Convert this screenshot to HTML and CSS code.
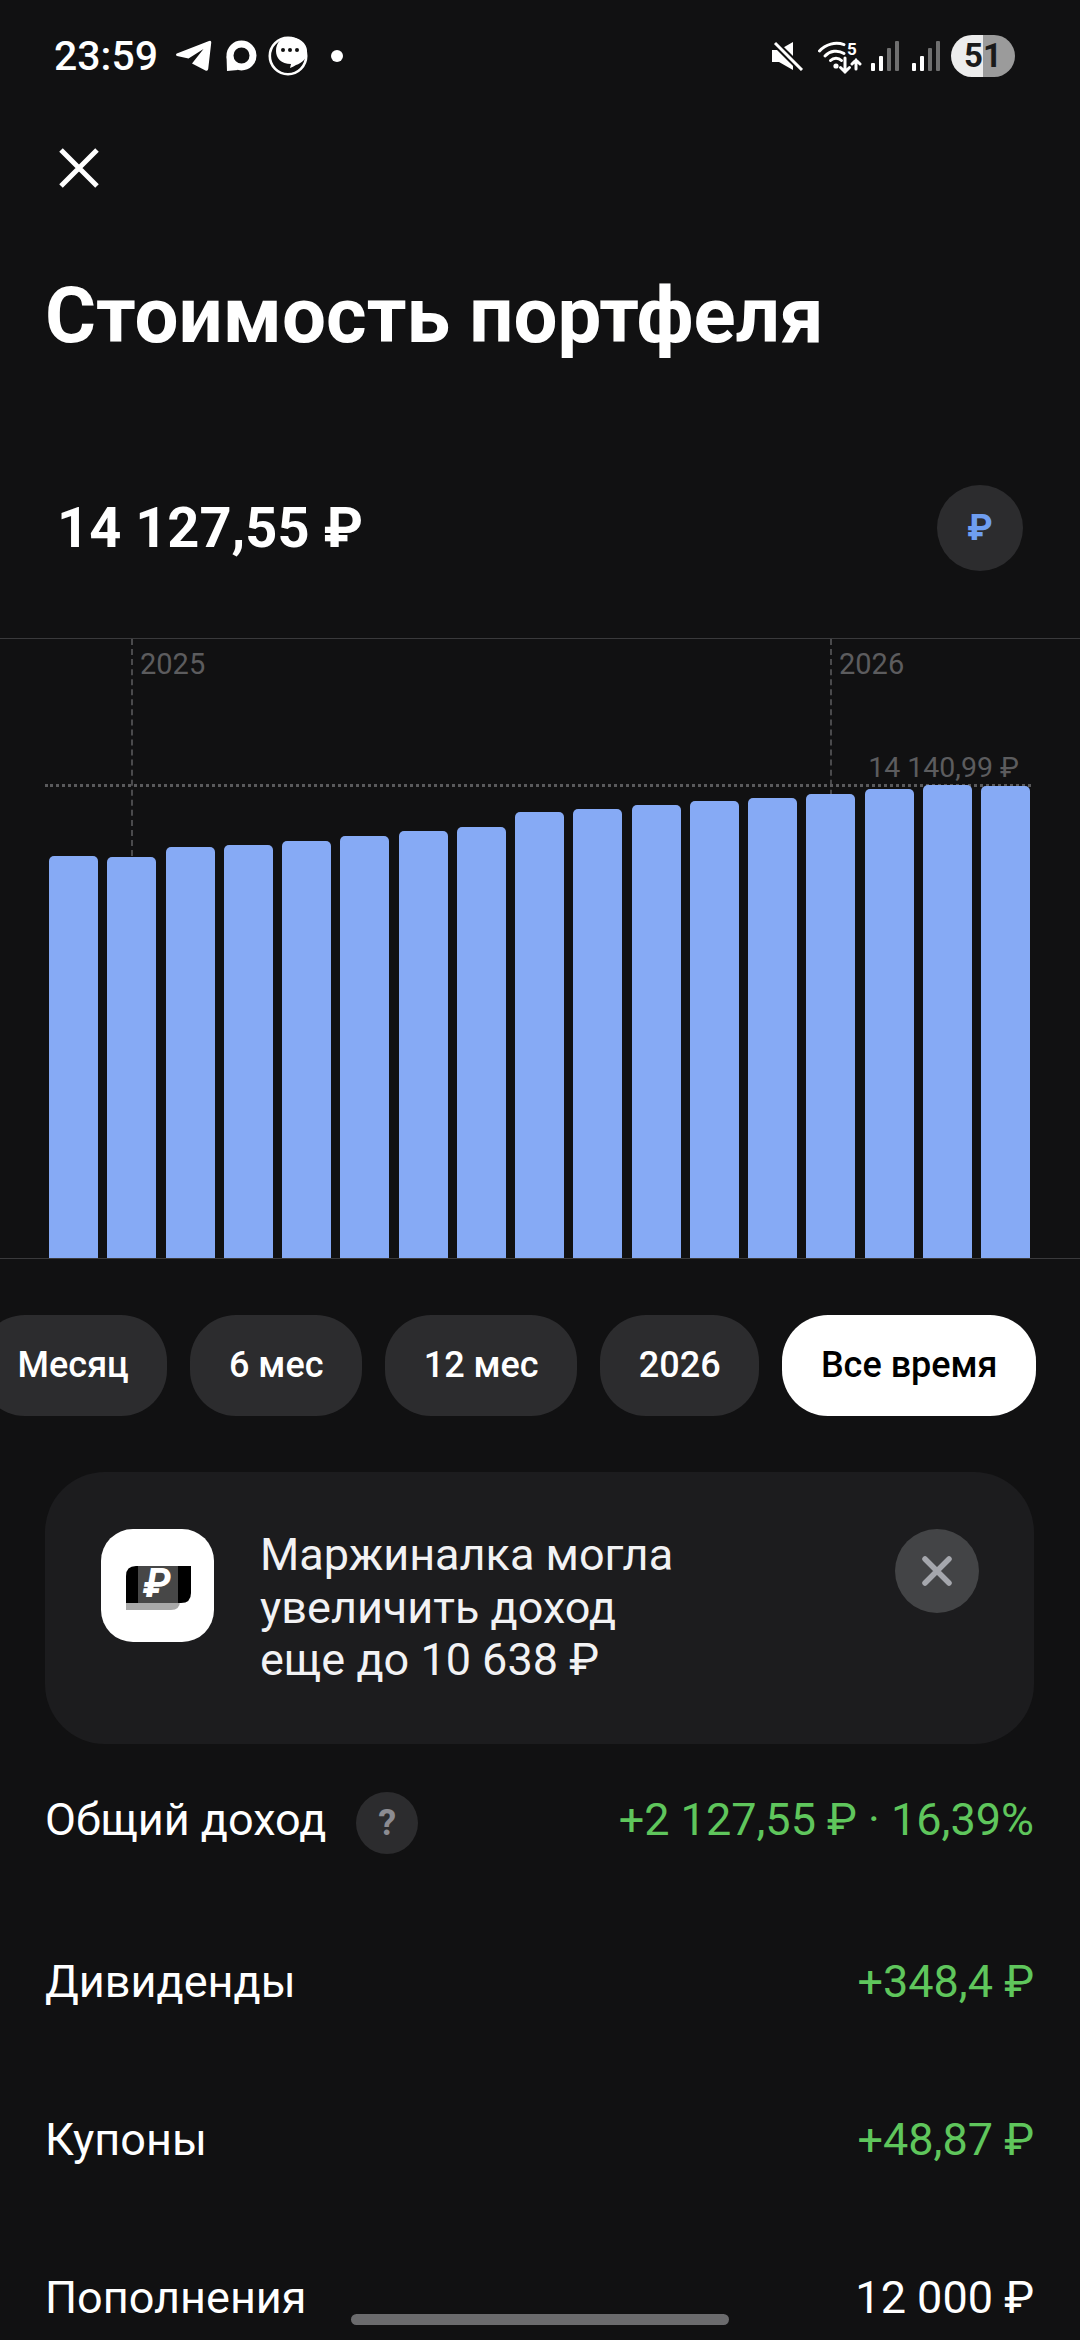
FILE: index.html
```html
<!DOCTYPE html>
<html lang="ru">
<head>
    <meta charset="UTF-8">
    <meta name="viewport" content="width=device-width, initial-scale=1.0">
    <title>Стоимость портфеля</title>
    <link rel="stylesheet" href="styles.css">
</head>
<body>
    <div class="statusbar">
        <div class="status-left">
            <span class="time">23:59</span>
            <svg class="ic-telegram" width="36" height="32" viewBox="0 0 36 32"><path fill="#fff" d="M0.8 13.6 L33 1 Q35.6 0 35.2 3 L32.2 29 Q31.8 31.8 29 30.3 L16 23.6 L27.5 9 L12.5 18.6 L1 16 Q-0.8 14.6 0.8 13.6 Z"/></svg>
            <svg class="ic-chat" width="32" height="32" viewBox="0 0 32 32"><circle cx="16.5" cy="15.5" r="11.5" fill="none" stroke="#fff" stroke-width="7"/><path fill="#fff" d="M1.5 16 L2 31 L13 30 Z"/></svg>
            <svg class="ic-smile" width="40" height="40" viewBox="0 0 40 40">
                <circle cx="20" cy="20" r="18.2" fill="none" stroke="#fff" stroke-width="2.6"/>
                <path fill="#fff" d="M21 1 C31 1 39 7 39 15 C39 23 34 27 28 29 Q25 31 22 32 L23 28 C13 28 8 22 8 15 C8 7 13 1 21 1 Z"/>
                <circle cx="15" cy="14" r="2" fill="#111"/><circle cx="22" cy="14" r="2" fill="#111"/><circle cx="29" cy="14" r="2" fill="#111"/>
            </svg>
            <span class="status-dot"></span>
        </div>
        <div class="status-right">
            <svg class="ic-mute" width="32" height="30" viewBox="0 0 32 30">
                <path fill="#fff" d="M0 9 H7 L21 1 V29 L7 21 H0 Z"/>
                <path d="M1 0 L30 29" stroke="#111" stroke-width="7"/>
                <path d="M3 2 L30 29" stroke="#fff" stroke-width="3"/>
            </svg>
            <svg class="ic-wifi" width="44" height="38" viewBox="0 -6 44 38">
                <g fill="none" stroke="#fff" stroke-width="3" stroke-linecap="round">
                    <path d="M1.5 8 A23 23 0 0 1 26 1.6"/>
                    <path d="M7 13 A15 15 0 0 1 26 10.5"/>
                    <path d="M12.5 17.5 A8 8 0 0 1 23.5 17.5"/>
                    <path d="M27 15 V29 M22.5 24.5 L27 29 L31.5 24.5"/>
                    <path d="M38 26 V17 M34 21 L38 17 L42 21"/>
                </g>
                <circle cx="18" cy="23" r="2.6" fill="#fff"/>
                <text class="wifi-num" x="29" y="12">5</text>
            </svg>
            <svg class="ic-signal" width="28" height="30" viewBox="0 0 28 30">
                <rect x="0" y="22" width="4" height="8" rx="1" fill="#fff"/><rect x="8" y="15" width="4" height="15" rx="1" fill="#fff"/>
                <rect x="16" y="7" width="4" height="23" rx="1" fill="#6f6f6f"/><rect x="24" y="0" width="4" height="30" rx="1" fill="#6f6f6f"/>
            </svg>
            <svg class="ic-signal2" width="28" height="30" viewBox="0 0 28 30">
                <rect x="0" y="22" width="4" height="8" rx="1" fill="#fff"/><rect x="8" y="15" width="4" height="15" rx="1" fill="#fff"/>
                <rect x="16" y="7" width="4" height="23" rx="1" fill="#6f6f6f"/><rect x="24" y="0" width="4" height="30" rx="1" fill="#6f6f6f"/>
            </svg>
            <div class="battery">51</div>
        </div>
    </div>

    <div class="nav">
        <svg width="40" height="40" viewBox="0 0 40 40"><path d="M2 2 L38 38 M38 2 L2 38" stroke="#fff" stroke-width="5"/></svg>
    </div>

    <h1 class="title">Стоимость портфеля</h1>

    <div class="value-row">
        <div class="value">14 127,55 ₽</div>
        <div class="currency">₽</div>
    </div>

    <div class="chart">
        <div class="year-line year-2025"><span>2025</span></div>
        <div class="year-line year-2026"><span>2026</span></div>
        <div class="max-line"><span>14 140,99 ₽</span></div>
        <div class="bars">
            <div class="bar" style="height:402px"></div>
            <div class="bar" style="height:401px"></div>
            <div class="bar" style="height:411px"></div>
            <div class="bar" style="height:413px"></div>
            <div class="bar" style="height:417px"></div>
            <div class="bar" style="height:422px"></div>
            <div class="bar" style="height:427px"></div>
            <div class="bar" style="height:431px"></div>
            <div class="bar" style="height:446px"></div>
            <div class="bar" style="height:449px"></div>
            <div class="bar" style="height:453px"></div>
            <div class="bar" style="height:457px"></div>
            <div class="bar" style="height:460px"></div>
            <div class="bar" style="height:464px"></div>
            <div class="bar" style="height:469px"></div>
            <div class="bar" style="height:473px"></div>
            <div class="bar" style="height:472px"></div>
        </div>
    </div>

    <div class="pills">
        <div class="pill">Месяц</div>
        <div class="pill">6 мес</div>
        <div class="pill">12 мес</div>
        <div class="pill">2026</div>
        <div class="pill active">Все время</div>
    </div>

    <div class="promo">
        <div class="promo-icon">
            <svg width="113" height="113" viewBox="0 0 113 113">
                <path fill="#a9a9a9" d="M25 60 H79 V72 Q79 81 70 81 H25 Z"/>
                <path fill="#000" d="M25 47 Q25 37 35 37 H90 V64 Q90 74 80 74 H25 Z"/>
                <rect x="37" y="37" width="40" height="37" fill="#474747"/>
                <text class="promo-rub" x="56" y="68" text-anchor="middle">₽</text>
            </svg>
        </div>
        <div class="promo-text">Маржиналка могла<br>увеличить доход<br>еще до 10 638 ₽</div>
        <div class="promo-close">
            <svg width="30" height="30" viewBox="0 0 30 30"><path d="M3 3 L27 27 M27 3 L3 27" stroke="#a5a7ad" stroke-width="5.5" stroke-linecap="round"/></svg>
        </div>
    </div>

    <div class="rows">
        <div class="row row-first">
            <div class="row-label">
                <span>Общий доход</span>
                <span class="help">?</span>
            </div>
            <span class="plus">+2 127,55 ₽ · 16,39%</span>
        </div>
        <div class="row">
            <span>Дивиденды</span>
            <span class="plus">+348,4 ₽</span>
        </div>
        <div class="row">
            <span>Купоны</span>
            <span class="plus">+48,87 ₽</span>
        </div>
        <div class="row">
            <span>Пополнения</span>
            <span>12 000 ₽</span>
        </div>
    </div>

    <div class="home-bar"></div>
</body>
</html>
```

FILE: styles.css
```css
html, body {
    margin: 0;
    padding: 0;
}
body {
    position: relative;
    width: 1080px;
    height: 2340px;
    overflow: hidden;
    background-color: #111112;
    color: #fff;
    font-family: Roboto, "Noto Sans", sans-serif;
}

/* status bar */
.statusbar {
    height: 112px;
    padding: 0 65px 0 54px;
    display: flex;
    justify-content: space-between;
    align-items: center;
}
.status-left, .status-right {
    display: flex;
    align-items: center;
}
.time {
    font-size: 41px;
    font-weight: 500;
    width: 122px;
}
.ic-chat {
    margin-left: 13px;
}
.ic-smile {
    margin-left: 11px;
}
.status-dot {
    width: 12px;
    height: 12px;
    margin-left: 23px;
    border-radius: 50%;
    background-color: #fff;
}
.ic-wifi {
    margin-left: 14px;
}
.wifi-num {
    font-size: 17px;
    font-weight: 700;
    fill: #fff;
}
.ic-signal {
    margin-left: 9px;
}
.ic-signal2 {
    margin-left: 13px;
}
.battery {
    width: 64px;
    height: 42px;
    margin-left: 11px;
    border-radius: 21px;
    background: linear-gradient(90deg, #ececec 50%, #9b9b9b 50%);
    color: #1a1a1a;
    font-size: 33px;
    font-weight: 700;
    line-height: 42px;
    text-align: center;
}

/* header */
.nav {
    height: 112px;
    padding-left: 59px;
    display: flex;
    align-items: center;
}
.title {
    margin: 50px 0 0 45px;
    font-size: 78px;
    font-weight: 700;
    line-height: 84px;
}
.value-row {
    height: 86px;
    margin-top: 127px;
    padding: 0 57px 0 57px;
    display: flex;
    justify-content: space-between;
    align-items: center;
}
.value {
    font-size: 56px;
    font-weight: 700;
}
.currency {
    width: 86px;
    height: 86px;
    border-radius: 50%;
    background-color: #2c2c2e;
    color: #6f9ef0;
    font-size: 36px;
    font-weight: 700;
    line-height: 86px;
    text-align: center;
}

/* chart */
.chart {
    position: relative;
    height: 619px;
    margin-top: 67px;
    border-top: 1px solid #3a3a3c;
    border-bottom: 1px solid #3a3a3c;
    display: flex;
    align-items: flex-end;
}
.year-line {
    position: absolute;
    top: 0;
    bottom: 0;
    border-left: 2px dashed #4a4a4c;
    color: #5c5c5e;
    font-size: 29px;
}
.year-line span {
    display: block;
    margin: 8px 0 0 7px;
}
.year-2025 {
    left: 131px;
}
.year-2026 {
    left: 830px;
}
.max-line {
    position: absolute;
    left: 45px;
    width: 986px;
    top: 145px;
    border-top: 3px dotted #5a5a5c;
    color: #5c5c5e;
    font-size: 28.5px;
}
.max-line span {
    position: absolute;
    right: 12px;
    bottom: 3px;
}
.bars {
    position: relative;
    margin-left: 49px;
    display: flex;
    align-items: flex-end;
    gap: 9.25px;
}
.bar {
    width: 49px;
    border-radius: 5px 5px 0 0;
    background-color: #86aaf5;
}

/* period pills */
.pills {
    margin: 56px 0 0 -21px;
    display: flex;
    gap: 23px;
}
.pill {
    height: 101px;
    padding: 0 38.6px;
    border-radius: 46px;
    background-color: #2c2c2e;
    font-size: 36px;
    font-weight: 500;
    line-height: 101px;
}
.pill.active {
    background-color: #fff;
    color: #000;
}

/* promo card */
.promo {
    width: 989px;
    height: 272px;
    margin: 56px 0 0 45px;
    padding: 57px 55px 0 56px;
    box-sizing: border-box;
    border-radius: 60px;
    background-color: #1c1c1e;
    display: flex;
    align-items: flex-start;
}
.promo-icon {
    width: 113px;
    height: 113px;
    border-radius: 32px;
    background-color: #fff;
    flex: none;
}
.promo-rub {
    font-size: 40px;
    font-weight: 700;
    font-style: italic;
    fill: #fff;
}
.promo-text {
    flex: 1;
    margin: 0 0 0 46px;
    color: #f2f2f4;
    font-size: 45px;
    line-height: 52.5px;
}
.promo-close {
    width: 84px;
    height: 84px;
    border-radius: 50%;
    background-color: #434446;
    display: flex;
    justify-content: center;
    align-items: center;
}

/* totals */
.rows {
    margin: 0 46px 0 45px;
}
.row {
    height: 158px;
    display: flex;
    justify-content: space-between;
    align-items: center;
    font-size: 45px;
}
.row-first > span, .row-label > span:first-child {
    position: relative;
    top: -4px;
}
.row-label {
    display: flex;
    align-items: center;
    gap: 30px;
}
.help {
    width: 62px;
    height: 62px;
    border-radius: 50%;
    background-color: #2c2c2e;
    color: #8c8c92;
    font-size: 36px;
    font-weight: 700;
    line-height: 62px;
    text-align: center;
}
.plus {
    color: #5fc65c;
}
.home-bar {
    position: absolute;
    left: 351px;
    top: 2314px;
    width: 378px;
    height: 11px;
    border-radius: 6px;
    background-color: #6b6b6d;
}
```
